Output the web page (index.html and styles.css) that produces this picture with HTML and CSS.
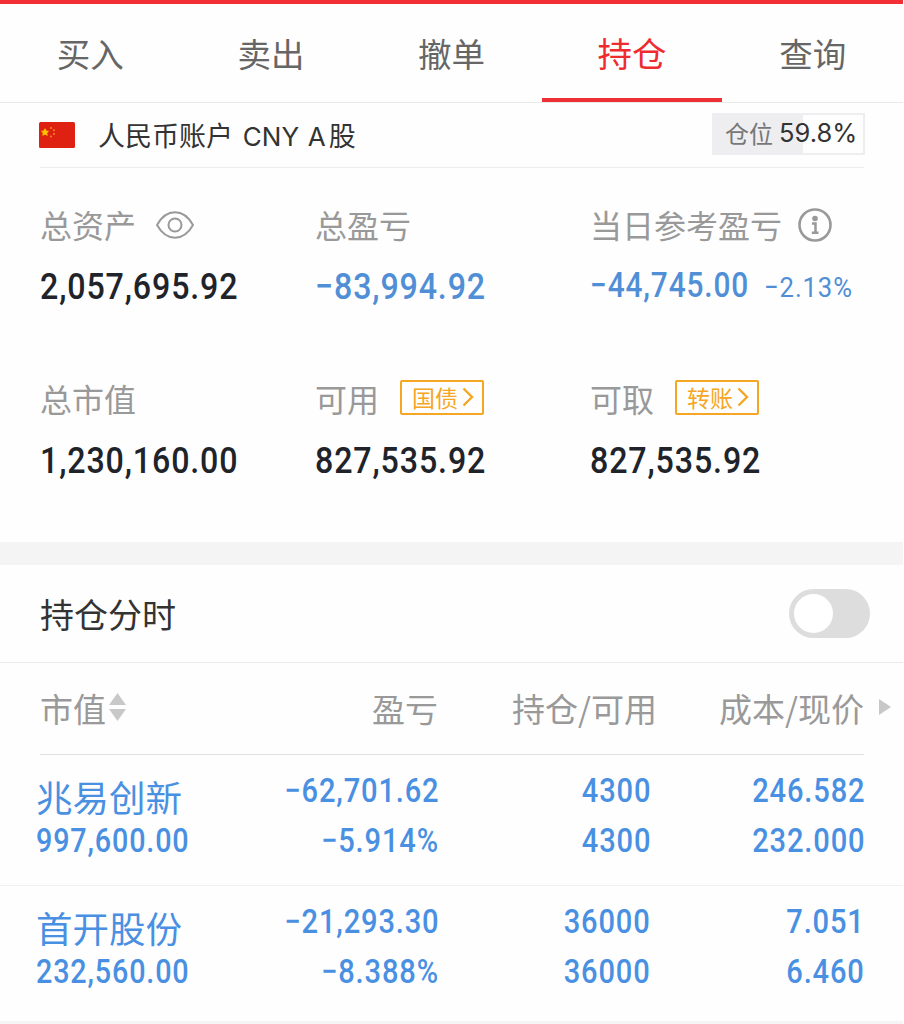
FILE: index.html
```html
<!DOCTYPE html>
<html lang="zh-CN">
<head>
<meta charset="utf-8">
<title>持仓</title>
<link rel="stylesheet" href="styles.css">
</head>
<body>
<div class="page">
  <nav class="tabs">
    <a class="tab">买入</a>
    <a class="tab">卖出</a>
    <a class="tab">撤单</a>
    <a class="tab active">持仓</a>
    <a class="tab">查询</a>
  </nav>

  <header class="account">
    <svg class="flag" width="36" height="26" viewBox="0 0 36 26">
      <rect width="36" height="26" rx="1.5" fill="#de2110"/>
      <path d="M6 6.8l1 2.3 2.4.2-1.8 1.6.6 2.4L6 12l-2.200 1.300.6-2.400-1.800-1.600 2.400-.2z" fill="#ffc400" stroke="#ffc400"/>
      <g fill="#f08a1c"><circle cx="12" cy="6" r="1"/><circle cx="15" cy="8.300" r="1"/><circle cx="15" cy="12" r="1"/><circle cx="12" cy="14.500" r="1"/></g>
    </svg>
    <span class="account-name">人民币账户<span class="latin"> CNY A</span>股</span>
    <span class="ratio"><span class="ratio-fill" style="width:59.8%"></span><span class="ratio-label">仓位</span><span class="ratio-value">59.8%</span></span>
  </header>

  <section class="summary">
    <div class="cell">
      <div class="label">总资产
        <svg class="eye" width="38" height="28" viewBox="0 0 38 28" fill="none" stroke="#999" stroke-width="2"><path d="M1 14C5.500 6 11.500 1.300 19 1.300S32.500 6 37 14C32.500 22 26.500 26.700 19 26.700S5.500 22 1 14z"/><circle cx="19" cy="14" r="6.500"/></svg>
      </div>
      <div class="value"><span class="num">2,057,695.92</span></div>
    </div>
    <div class="cell">
      <div class="label">总盈亏</div>
      <div class="value loss"><span class="num">−83,994.92</span></div>
    </div>
    <div class="cell">
      <div class="label">当日参考盈亏
        <svg class="info" width="34" height="34" viewBox="0 0 34 34" fill="none" stroke="#999"><circle cx="17" cy="17" r="15.500" stroke-width="2.600"/><circle cx="17" cy="10.500" r="2.800" fill="#999" stroke="none"/><path d="M14 15.500h3.500v9M13.800 24.700h6.700" stroke-width="2.500"/></svg>
      </div>
      <div class="value loss day"><span class="num">−44,745.00</span><span class="num pct">−2.13%</span></div>
    </div>
    <div class="cell">
      <div class="label">总市值</div>
      <div class="value"><span class="num">1,230,160.00</span></div>
    </div>
    <div class="cell">
      <div class="label">可用
        <span class="action">国债<svg width="12" height="20" viewBox="0 0 12 20" fill="none" stroke="#f5a623" stroke-width="2.400"><path d="M1.500 1.500L10 10l-8.500 8.500"/></svg></span>
      </div>
      <div class="value"><span class="num">827,535.92</span></div>
    </div>
    <div class="cell">
      <div class="label">可取
        <span class="action">转账<svg width="12" height="20" viewBox="0 0 12 20" fill="none" stroke="#f5a623" stroke-width="2.400"><path d="M1.500 1.500L10 10l-8.500 8.500"/></svg></span>
      </div>
      <div class="value"><span class="num">827,535.92</span></div>
    </div>
  </section>

  <section class="intraday">
    <span class="intraday-title">持仓分时</span>
    <span class="switch"><span class="knob"></span></span>
  </section>

  <div class="columns head">
    <span class="col-name">市值<svg class="sort" width="17" height="28" viewBox="0 0 17 28" fill="#c8c8c8"><path d="M8.500 0L17 12H0zM0 16h17L8.500 28z"/></svg></span>
    <span>盈亏</span>
    <span>持仓/可用</span>
    <span>成本/现价</span>
    <svg class="more" width="12" height="16" viewBox="0 0 12 16" fill="#c8c8c8"><path d="M0 0l12 8-12 8z"/></svg>
  </div>

  <div class="columns holding">
    <div class="stock"><span class="stock-name">兆易创新</span><span class="num">997,600.00</span></div>
    <div class="pair"><span class="num">−62,701.62</span><span class="num">−5.914%</span></div>
    <div class="pair"><span class="num">4300</span><span class="num">4300</span></div>
    <div class="pair"><span class="num">246.582</span><span class="num">232.000</span></div>
  </div>
  <div class="columns holding last">
    <div class="stock"><span class="stock-name">首开股份</span><span class="num">232,560.00</span></div>
    <div class="pair"><span class="num">−21,293.30</span><span class="num">−8.388%</span></div>
    <div class="pair"><span class="num">36000</span><span class="num">36000</span></div>
    <div class="pair"><span class="num">7.051</span><span class="num">6.460</span></div>
  </div>
  <div class="footer-band"></div>
</div>
</body>
</html>
```
FILE: styles.css
```css
* { box-sizing: border-box; }

body {
  margin: 0;
  background: #fff;
  font-family: "Noto Sans CJK SC", sans-serif;
  color: #333;
}

.page {
  width: 903px;
  height: 1024px;
  overflow: hidden;
  border-top: 4px solid #f22f35;
  background: #fefefe;
}

.num {
  display: inline-block;
  font-family: Roboto, sans-serif;
  font-weight: 500;
  letter-spacing: 1px;
  white-space: nowrap;
  transform: scaleX(.87);
  transform-origin: left center;
}

.tabs {
  display: grid;
  grid-template-columns: repeat(5, 1fr);
  height: 99px;
  border-bottom: 1px solid #e9e9e9;
}

.tab {
  height: 98px;
  line-height: 97px;
  text-align: center;
  font-size: 33.500px;
  color: #666;
}

.tab.active {
  font-size: 34.500px;
  line-height: 97px;
  color: #ee2c30;
  border-bottom: 4px solid #ee2f33;
}

.account {
  display: flex;
  align-items: center;
  height: 65px;
  margin: 0 39px 0 40px;
  border-bottom: 1px solid #eee;
}

.flag { margin-left: -1px; }

.account-name {
  margin-left: 23px;
  padding-top: 2px;
  font-size: 27px;
  line-height: 60px;
  white-space: pre;
}

.latin {
  margin: 0 3px 0 1px;
  font-family: Inter, sans-serif;
  font-size: 26px;
  word-spacing: 1.500px;
}

.ratio {
  position: relative;
  display: flex;
  align-items: center;
  width: 153px;
  height: 42px;
  margin: -2px -1px 0 auto;
  padding-left: 11px;
  border: 2px solid #eeeef1;
  font-size: 24px;
  line-height: 36px;
}

.ratio-fill {
  position: absolute;
  left: 0;
  top: 0;
  bottom: 0;
  background: #eeeef1;
}

.ratio-label { position: relative; margin-top: -2px; color: #777; }

.ratio-value {
  position: relative;
  margin: -2px 0 0 6px;
  font-family: Inter, sans-serif;
  font-size: 25.500px;
}

.summary {
  display: grid;
  grid-template-columns: 275px 275px 1fr;
  grid-auto-rows: 174px;
  height: 374px;
  padding: 34px 0 0 40px;
}

.label {
  display: flex;
  align-items: center;
  height: 44px;
  font-size: 32px;
  line-height: 44px;
  color: #999;
}

.eye { margin: 2px 0 0 20px; }
.info { margin: 2px 0 0 16px; }

.value {
  display: flex;
  height: 44px;
  margin-top: 18px;
  font-size: 37px;
  line-height: 46px;
  color: #20242a;
}

.value.loss { color: #508fd6; }
.value.day { font-size: 35px; line-height: 44px; }
.day .num { transform: scaleX(.853); }

.day .pct {
  margin-left: -13px;
  font-size: 28.500px;
  line-height: 47px;
  font-weight: 400;
  transform: scaleX(.9);
}

.action {
  display: flex;
  align-items: center;
  gap: 4px;
  width: 84px;
  height: 35px;
  margin: -2px 0 0 21px;
  padding-left: 10px;
  border: 2px solid #f5a623;
  border-radius: 2px;
  font-size: 23px;
  line-height: 30px;
  color: #f5a623;
}

.intraday {
  display: flex;
  align-items: center;
  justify-content: space-between;
  height: 121px;
  padding: 0 33px 0 40px;
  border-top: 23px solid #f4f4f4;
  border-bottom: 1px solid #eaeaea;
}

.intraday-title { font-size: 34px; line-height: 60px; }

.switch {
  width: 81px;
  height: 49px;
  padding: 5px;
  border-radius: 25px;
  background: #ddd;
}

.knob {
  display: block;
  width: 39px;
  height: 39px;
  border-radius: 50%;
  background: #fff;
}

.columns {
  display: grid;
  grid-template-columns: 202px 200px 212px 214px auto;
  text-align: right;
}

.head {
  align-items: center;
  height: 92px;
  margin: 0 0 0 40px;
  padding-bottom: 3px;
  background: linear-gradient(#e2e2e2, #e2e2e2) left bottom / 824px 1px no-repeat;
  grid-template-columns: 198px 200px 219px 207px auto;
  font-size: 33px;
  line-height: 88px;
  color: #999;
}

.col-name {
  display: flex;
  align-items: center;
  gap: 3px;
}

.sort { margin-top: -2px; }
.more { margin: -2px 0 0 15px; }

.holding {
  height: 131px;
  padding: 14px 0 0 36px;
  border-bottom: 1px solid #f0f0f0;
  font-size: 34px;
  color: #4a90e2;
}

.holding.last { border-bottom: 0; }

.stock {
  display: flex;
  flex-direction: column;
  align-items: flex-start;
  padding-top: 3px;
}

.stock-name { font-size: 36.500px; line-height: 50px; }
.stock .num { line-height: 36px; transform: scaleX(.845); }

.pair {
  display: flex;
  flex-direction: column;
  align-items: flex-end;
}

.pair .num {
  height: 50px;
  margin-right: -1px;
  line-height: 43px;
  transform: scaleX(.855);
  transform-origin: right center;
}

.footer-band { height: 20px; margin-top: 4px; background: #f5f5f5; }
```
